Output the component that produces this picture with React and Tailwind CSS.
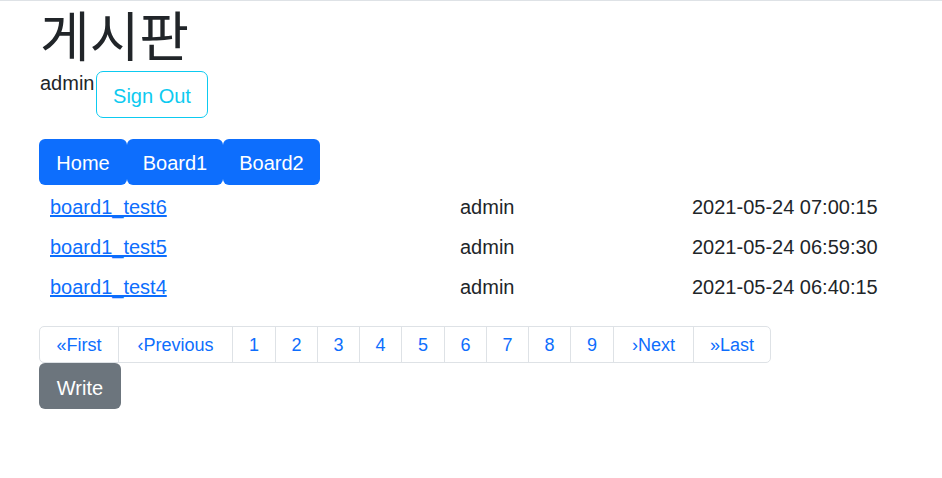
const posts = [
  { title: 'board1_test6', writer: 'admin', date: '2021-05-24 07:00:15' },
  { title: 'board1_test5', writer: 'admin', date: '2021-05-24 06:59:30' },
  { title: 'board1_test4', writer: 'admin', date: '2021-05-24 06:40:15' },
];

const pages = [
  { label: '«First', w: 'w-[80px]' },
  { label: '‹Previous', w: 'w-[115px]' },
  { label: '1', w: 'w-[44px]' },
  { label: '2', w: 'w-[43px]' },
  { label: '3', w: 'w-[43px]' },
  { label: '4', w: 'w-[43px]' },
  { label: '5', w: 'w-[44px]' },
  { label: '6', w: 'w-[43px]' },
  { label: '7', w: 'w-[43px]' },
  { label: '8', w: 'w-[43px]' },
  { label: '9', w: 'w-[44px]' },
  { label: '›Next', w: 'w-[81px]' },
  { label: '»Last', w: 'w-[78px]' },
];

export default function App() {
  return (
    <div className="min-h-[478px] bg-white border-t border-[#dee2e6] text-[#212529] text-[20px] leading-[30px] font-['Liberation_Sans','Noto_Sans_CJK_KR',sans-serif]">
      <div className="px-[39px]">
        <h1 className="h-[70px] text-[54px] leading-[66px] font-normal font-['Noto_Sans_CJK_KR',sans-serif] ml-[1px]">게시판</h1>

        <div className="flex items-start ml-[1px]">
          <span className="w-[56px] leading-[24px]">admin</span>
          <button className="w-[112px] h-[47px] pt-[2px] border border-[#0dcaf0] text-[#0dcaf0] rounded-[7px] text-[20px]">
            Sign Out
          </button>
        </div>

        <div className="flex mt-[21px]">
          <button className="w-[88px] h-[46px] pt-[2px] bg-[#0d6efd] text-white rounded-[6px]">Home</button>
          <button className="w-[96px] h-[46px] pt-[2px] bg-[#0d6efd] text-white rounded-[6px]">Board1</button>
          <button className="w-[97px] h-[46px] pt-[2px] bg-[#0d6efd] text-white rounded-[6px]">Board2</button>
        </div>

        <table className="w-[863px] mt-[2px] mb-[19px] table-fixed">
          <tbody>
            {posts.map((p) => (
              <tr key={p.title} className="h-[40px]">
                <td className="w-[411px] pl-[11px] pr-[10px]">
                  <a href="#" className="text-[#0d6efd] underline">{p.title}</a>
                </td>
                <td className="w-[232px] px-[10px]">{p.writer}</td>
                <td className="px-[10px]">{p.date}</td>
              </tr>
            ))}
          </tbody>
        </table>

        <div className="flex w-fit">
          {pages.map((p, i) => (
            <a
              key={p.label}
              href="#"
              className={`${p.w} h-[37px] flex items-center justify-center border border-[#dee2e6] text-[#0d6efd] text-[18px] -ml-px first:ml-0 ${i === 0 ? 'rounded-l-[5px]' : ''} ${i === pages.length - 1 ? 'rounded-r-[5px]' : ''}`}
            >
              {p.label}
            </a>
          ))}
        </div>

        <button className="w-[82px] h-[46px] pt-[3px] bg-[#6c757d] text-white rounded-[6px]">Write</button>
      </div>
    </div>
  );
}
